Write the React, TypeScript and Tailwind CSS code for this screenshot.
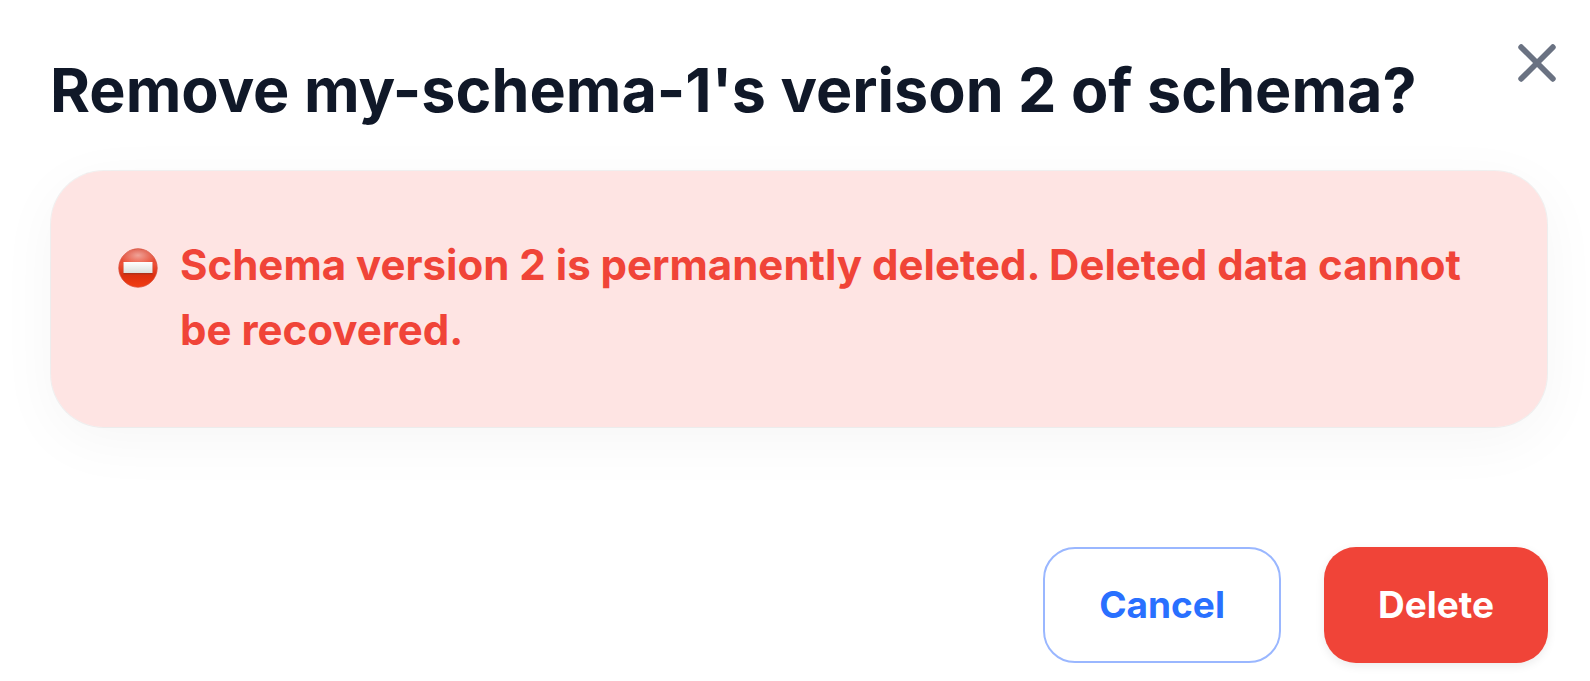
import { X } from "lucide-react";

interface RemoveSchemaDialogProps {
  schemaName: string;
  version: number;
}

function NoEntryIcon() {
  return (
    <svg viewBox="0 0 40 40" className="mt-4 size-10 shrink-0" aria-hidden="true">
      <defs>
        <linearGradient id="disc" x1="0" y1="0" x2="0" y2="1">
          <stop offset="0" stopColor="#d8402c" />
          <stop offset="0.4" stopColor="#ee5038" />
          <stop offset="0.7" stopColor="#dc300f" />
          <stop offset="1" stopColor="#f23c12" />
        </linearGradient>
        <radialGradient id="gloss" cx="0.5" cy="0.35" r="0.6">
          <stop offset="0" stopColor="#fff" stopOpacity="0.5" />
          <stop offset="1" stopColor="#fff" stopOpacity="0" />
        </radialGradient>
        <linearGradient id="bar" x1="0" y1="0" x2="0" y2="1">
          <stop offset="0" stopColor="#ffffff" />
          <stop offset="1" stopColor="#dcdfdc" />
        </linearGradient>
      </defs>
      <circle cx="20" cy="20" r="19.2" fill="url(#disc)" stroke="#d84a36" strokeWidth="0.8" />
      <ellipse cx="20" cy="10" rx="16" ry="9" fill="url(#gloss)" />
      <rect x="5.5" y="15" width="29" height="11.5" fill="#9a2e18" opacity="0.65" />
      <rect x="5.5" y="14" width="29" height="11" fill="url(#bar)" />
    </svg>
  );
}

function RemoveSchemaDialog({ schemaName, version }: RemoveSchemaDialogProps) {
  return (
    <div
      role="dialog"
      aria-labelledby="dialog-title"
      className="bg-white pt-[38px] pb-[18px] font-['Inter',sans-serif]"
    >
      {/* Header */}
      <div className="flex items-start justify-between gap-4 pl-[50px] pr-6">
        <h1
          id="dialog-title"
          className="mt-3 text-[61px] leading-[80px] font-bold text-gray-900"
        >
          {`Remove ${schemaName}'s verison ${version} of schema?`}
        </h1>
        <button type="button" aria-label="Close" className="-mt-1 shrink-0 cursor-pointer text-gray-500">
          <X className="size-[58px]" viewBox="1 1 22 22" strokeWidth={2.2} />
        </button>
      </div>

      {/* Warning */}
      <div className="mt-10 mr-[42px] ml-[50px] flex items-start gap-[22px] rounded-[54px] border border-black/5 bg-[#fee4e3] bg-clip-padding px-[67px] pt-[61px] pb-[65px] shadow-[0_14px_60px_rgba(0,0,0,0.04)]">
        <NoEntryIcon />
        <p className="text-[42px] leading-[65px] font-bold text-[#f04438]">
          {`Schema version ${version} is permanently deleted. Deleted data cannot be recovered.`}
        </p>
      </div>

      {/* Actions */}
      <div className="mt-[119px] flex justify-end gap-[43px] px-[42px] text-[37px] leading-[52px] font-bold">
        <button
          type="button"
          className="cursor-pointer rounded-[32px] border-2 border-[#9ab7ff] bg-white px-[54px] py-[30px] text-[#2970ff]"
        >
          Cancel
        </button>
        <button
          type="button"
          className="cursor-pointer rounded-[32px] bg-[#f04438] px-[54px] py-8 text-white shadow-[0_3px_10px_rgba(0,0,0,0.08)]"
        >
          Delete
        </button>
      </div>
    </div>
  );
}

export default function App() {
  return <RemoveSchemaDialog schemaName="my-schema-1" version={2} />;
}
